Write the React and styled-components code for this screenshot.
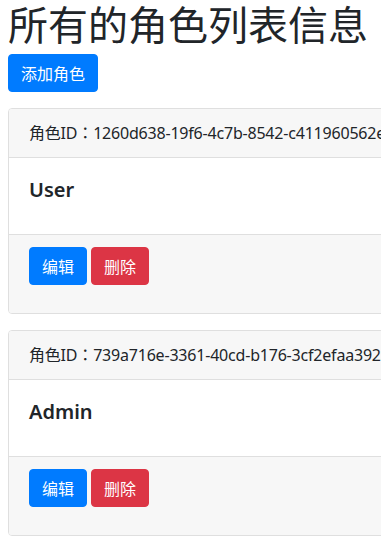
import React from "react";
import styled, { createGlobalStyle } from "styled-components";

const Global = createGlobalStyle`
  html, body { margin: 0; padding: 0; overflow: hidden; background: #fff; }
  body {
    font-family: "Noto Sans", "Noto Sans CJK SC", sans-serif;
    font-size: 16px;
    line-height: 1.5;
    color: #212529;
  }
`;

const Page = styled.div`
  padding: 0 8px;
  width: 640px;
`;

const Title = styled.h1`
  margin: 0 0 8px;
  font-size: 40px;
  line-height: 46px;
  font-weight: 400;
  font-family: "Noto Sans CJK SC", sans-serif;
  white-space: nowrap;
`;

const Button = styled.button`
  display: inline-block;
  box-sizing: border-box;
  height: 38px;
  padding: 0 12px;
  font-family: "Noto Sans CJK SC", sans-serif;
  font-size: 16px;
  line-height: 36px;
  color: #fff;
  border: 1px solid ${(p) => (p.$variant === "danger" ? "#dc3545" : "#007bff")};
  background: ${(p) => (p.$variant === "danger" ? "#dc3545" : "#007bff")};
  border-radius: 4px;
  cursor: pointer;
`;

const AddButton = styled(Button)`
  margin-bottom: 16px;
`;

const CardList = styled.div`
  display: flex;
  flex-direction: column;
  gap: 16px;
`;

const Card = styled.div`
  border: 1px solid #dfdfdf;
  border-radius: 4px;
  background: #fff;
  overflow: hidden;
`;

const CardHeader = styled.div`
  height: 24px;
  padding: 12px 20px;
  background: #f7f7f7;
  border-bottom: 1px solid #dfdfdf;
  line-height: 24px;
  white-space: nowrap;
  letter-spacing: -0.2px;
`;

const Colon = styled.span`
  font-family: "Noto Sans CJK TC", sans-serif;
  line-height: 1;
`;

const CardBody = styled.div`
  padding: 20px 20px;
`;

const RoleName = styled.h5`
  margin: 0 0 12px;
  font-size: 20px;
  line-height: 24px;
  font-weight: 600;
`;

const CardFooter = styled.div`
  padding: 12px 20px;
  background: #f7f7f7;
  border-top: 1px solid #dfdfdf;
`;

const Actions = styled.div`
  display: flex;
  gap: 4px;
  margin-bottom: 16px;
`;

const roles = [
  { id: "1260d638-19f6-4c7b-8542-c411960562e9", name: "User" },
  { id: "739a716e-3361-40cd-b176-3cf2efaa3923", name: "Admin" },
];

export default function App() {
  return (
    <>
      <Global />
      <Page>
        <Title>所有的角色列表信息</Title>
        <AddButton>添加角色</AddButton>
        <CardList>
          {roles.map((r) => (
            <Card key={r.id}>
              <CardHeader>
                角色ID<Colon>：</Colon>
                {r.id}
              </CardHeader>
              <CardBody>
                <RoleName>{r.name}</RoleName>
              </CardBody>
              <CardFooter>
                <Actions>
                  <Button>编辑</Button>
                  <Button $variant="danger">删除</Button>
                </Actions>
              </CardFooter>
            </Card>
          ))}
        </CardList>
      </Page>
    </>
  );
}
